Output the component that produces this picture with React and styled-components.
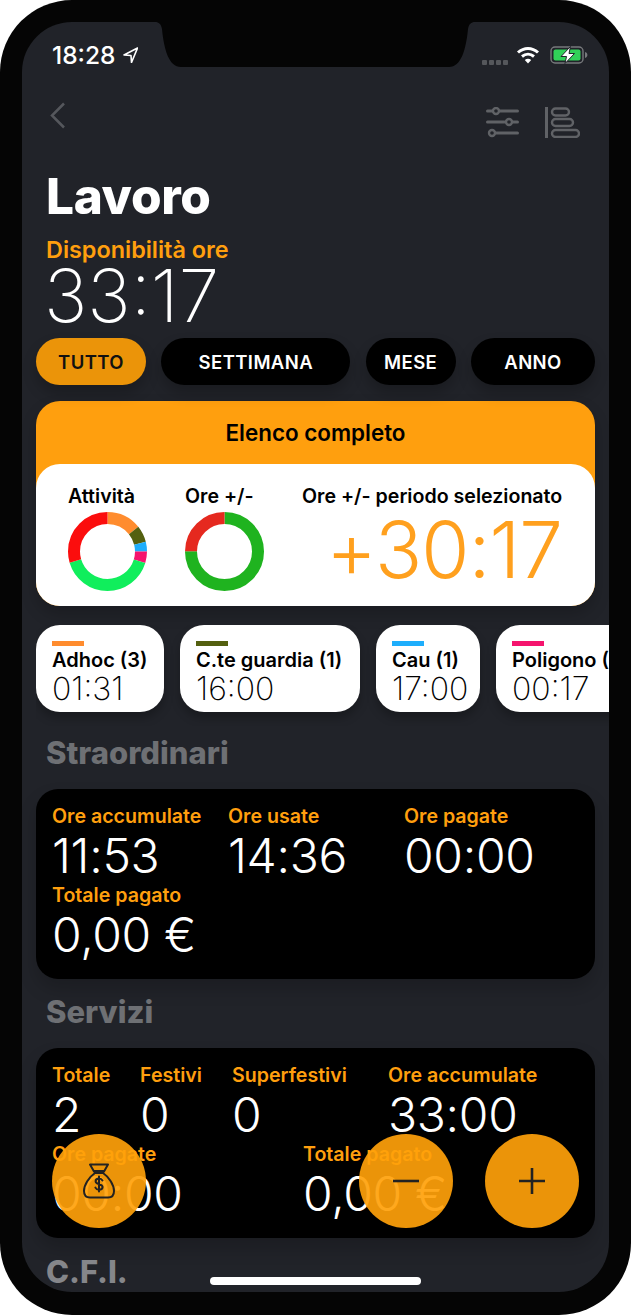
import styled, { createGlobalStyle } from "styled-components";

const GlobalStyle = createGlobalStyle`
  html, body {
    margin: 0;
    padding: 0;
    background: #fff;
    font-family: Inter, "Liberation Sans", sans-serif;
  }
`;

const ORANGE = "#ff9f0e";
const FAB_ORANGE = "#eb9409";

const Bezel = styled.div`
  width: 631px;
  height: 1315px;
  box-sizing: border-box;
  padding: 22px;
  background: #050505;
  border-radius: 72px;
`;

const Screen = styled.div`
  position: relative;
  height: 1270px;
  overflow: hidden;
  border-radius: 50px;
  background: #212329;
  color: #fff;
`;

const Notch = styled.svg`
  position: absolute;
  top: 0;
  left: 130px;
  width: 326px;
  height: 45px;
`;

const StatusBar = styled.div`
  display: flex;
  align-items: center;
  justify-content: space-between;
  height: 26px;
  padding: 20px 21px 0 30px;
`;

const StatusGroup = styled.div`
  display: flex;
  align-items: center;
  gap: ${(p) => p.$gap || 7}px;
`;

const Clock = styled.span`
  font-size: 24.5px;
  font-weight: 500;
`;

const SignalDots = styled.div`
  display: flex;
  gap: 2px;
  margin-top: 14px;
  span {
    width: 5px;
    height: 5px;
    border-radius: 1px;
    background: #55575b;
  }
`;

const NavBar = styled.div`
  display: flex;
  justify-content: space-between;
  align-items: flex-start;
  padding: 34px 29px 0 27px;
  height: 51px;
`;

const NavActions = styled.div`
  display: flex;
  gap: 26px;
  margin-top: 5px;
`;

const Content = styled.div`
  padding: 0 14px;
`;

const Title = styled.h1`
  margin: 15px 0 0 10px;
  font-size: 49.5px;
  line-height: 57px;
  font-weight: 800;
  letter-spacing: -0.3px;
`;

const Available = styled.div`
  margin: 12px 0 0 10px;
  font-size: 23.4px;
  line-height: 26px;
  font-weight: 600;
  color: ${ORANGE};
`;

const BigTime = styled.div`
  margin: 2px 0 0 8px;
  font-size: 73px;
  line-height: 62px;
  font-weight: 200;
`;

const Pills = styled.div`
  display: flex;
  justify-content: space-between;
  margin-top: 11px;
`;

const Pill = styled.div`
  display: flex;
  align-items: center;
  justify-content: center;
  width: ${(p) => p.$width}px;
  height: 47px;
  border-radius: 24px;
  font-size: 18.5px;
  font-weight: 600;
  letter-spacing: 0.4px;
  background: ${(p) => (p.$active ? FAB_ORANGE : "#000")};
  color: ${(p) => (p.$active ? "#111" : "#fff")};
  box-shadow: 0 8px 14px rgba(0, 0, 0, 0.22);
`;

const SummaryCard = styled.section`
  margin-top: 16px;
  height: 205px;
  display: flex;
  flex-direction: column;
  border-radius: 24px;
  background: ${ORANGE};
  box-shadow: 0 8px 16px rgba(0, 0, 0, 0.2);
`;

const SummaryTitle = styled.div`
  height: 63px;
  display: flex;
  align-items: center;
  justify-content: center;
  font-size: 22.4px;
  font-weight: 600;
  color: #000;
`;

const SummaryBody = styled.div`
  flex: 1;
  display: flex;
  padding: 20px 32px 0;
  border-radius: 24px;
  background: #fff;
  color: #000;
`;

const DonutColumn = styled.div`
  width: 117px;
  font-size: 19.6px;
  line-height: 24px;
  font-weight: 600;
  svg {
    display: block;
    margin-top: 4px;
  }
`;

const PeriodColumn = styled.div`
  flex: 1;
  font-size: 19.6px;
  line-height: 24px;
  font-weight: 600;
  white-space: nowrap;
`;

const PeriodValue = styled.div`
  margin: 4px 0 0 24px;
  font-size: 78px;
  line-height: 76px;
  font-weight: 300;
  letter-spacing: -1px;
  color: #ffa01e;
`;

const Chips = styled.div`
  display: flex;
  gap: 16px;
  margin: 19px -14px 0 0;
  overflow: hidden;
  padding-bottom: 14px;
`;

const Chip = styled.div`
  flex: none;
  box-sizing: border-box;
  width: ${(p) => p.$width}px;
  height: 87px;
  padding: 16px 0 0 16px;
  border-radius: 24px;
  background: #fff;
  color: #000;
  box-shadow: 0 6px 10px rgba(0, 0, 0, 0.25);
  white-space: nowrap;
  overflow: hidden;
`;

const ChipBar = styled.div`
  width: 32px;
  height: 5px;
  background: ${(p) => p.$color};
`;

const ChipLabel = styled.div`
  margin-top: 2px;
  font-size: 20px;
  line-height: 25px;
  font-weight: 600;
`;

const ChipValue = styled.div`
  font-size: 32px;
  line-height: 32px;
  font-weight: 200;
`;

const SectionTitle = styled.h2`
  margin: ${(p) => p.$top}px 0 0 10px;
  font-size: 31px;
  line-height: 34px;
  font-weight: 800;
  color: ${(p) => p.$color || "#6e7074"};
`;

const StatsCard = styled.section`
  margin-top: 19px;
  height: 190px;
  box-sizing: border-box;
  padding: 15px 16px 0;
  border-radius: 22px;
  background: #000;
  box-shadow: 0 10px 18px rgba(0, 0, 0, 0.18);
`;

const StatsRow = styled.div`
  display: flex;
  height: 79px;
`;

const Stat = styled.div`
  width: ${(p) => p.$width}px;
  flex: none;
  white-space: nowrap;
`;

const StatLabel = styled.div`
  font-size: 19.6px;
  line-height: 24px;
  font-weight: 600;
  color: ${ORANGE};
`;

const StatValue = styled.div`
  font-size: 48px;
  line-height: 56px;
  font-weight: 300;
  letter-spacing: -0.3px;
`;

const Fab = styled.button`
  position: absolute;
  top: 1112px;
  left: ${(p) => p.$left}px;
  width: 94px;
  height: 94px;
  padding: 0;
  display: flex;
  align-items: center;
  justify-content: center;
  border: 0;
  border-radius: 50%;
  background: rgba(255, 161, 10, 0.92);
  color: #222;
`;

const HomeIndicator = styled.div`
  position: absolute;
  left: 188px;
  bottom: 7px;
  width: 211px;
  height: 8px;
  border-radius: 4px;
  background: #fff;
`;

function Donut({ segments }) {
  // dash segments run clockwise from 12 o'clock
  const r = 33.5;
  const c = 2 * Math.PI * r;
  let offset = 0;
  return (
    <svg width="79" height="79" viewBox="0 0 79 79">
      <g transform="rotate(-90 39.5 39.5)" fill="none" strokeWidth="12">
        {segments.map(([share, color]) => {
          const arc = (
            <circle
              key={color}
              cx="39.5"
              cy="39.5"
              r={r}
              stroke={color}
              strokeDasharray={`${share * c} ${c}`}
              strokeDashoffset={-offset * c}
            />
          );
          offset += share;
          return arc;
        })}
      </g>
    </svg>
  );
}

const chips = [
  { label: "Adhoc (3)", value: "01:31", color: "#ff8c2e", width: 128 },
  { label: "C.te guardia (1)", value: "16:00", color: "#546010", width: 180 },
  { label: "Cau (1)", value: "17:00", color: "#1eaefc", width: 104 },
  { label: "Poligono (1)", value: "00:17", color: "#f5146e", width: 160 },
];

export default function App() {
  return (
    <>
      <GlobalStyle />
      <Bezel>
        <Screen>
          <Notch viewBox="0 0 326 45">
            <path d="M0 0h3c4 0 6 2 7 7C12 28 17 45 29 45H297C309 45 314 28 316 7c1-5 3-7 7-7h3z" fill="#050505" />
          </Notch>

          <StatusBar>
            <StatusGroup>
              <Clock>18:28</Clock>
              <svg width="15" height="16" viewBox="0 0 15 16" fill="none" stroke="#fff" strokeWidth="1.6" strokeLinejoin="round">
                <path d="M14.500 1 1 8l7 .5.500 7z" />
              </svg>
            </StatusGroup>
            <StatusGroup $gap={8}>
              <SignalDots>
                <span />
                <span />
                <span />
                <span />
              </SignalDots>
              <svg width="24" height="18" viewBox="0 0 24 18" fill="none" stroke="#fff" strokeWidth="3">
                <path d="M2 6.500c6-5.500 14-5.500 20 0" />
                <path d="M6 10.500c3.600-3 8.400-3 12 0" />
                <path d="M12 17.500l-3.200-3.600c1.800-1.400 4.600-1.400 6.400 0z" fill="#fff" stroke="none" />
              </svg>
              <svg width="38" height="18" viewBox="0 0 38 18" style={{ marginLeft: 2 }}>
                <rect x="1" y="1" width="32" height="16" rx="4" fill="none" stroke="#77797c" strokeWidth="1.4" />
                <rect x="3.500" y="3.500" width="27" height="11" rx="2" fill="#31d158" />
                <path d="M35 6c1.600.4 2.400 1.600 2.400 3s-.8 2.600-2.400 3z" fill="#77797c" />
                <path d="M20.500.5 11 10.500h5.500L15 17.500l9.500-10H19z" fill="#fff" stroke="#212329" strokeWidth="1" />
              </svg>
            </StatusGroup>
          </StatusBar>

          <NavBar>
            <svg width="17" height="27" viewBox="0 0 17 27" fill="none" stroke="#55575c" strokeWidth="2.5">
              <path d="M15 1.500 3 13.500l12 12" />
            </svg>
            <NavActions>
              <svg width="33" height="31" viewBox="0 0 33 31" fill="none" stroke="#606266" strokeWidth="3" strokeLinecap="round">
                <path d="M1.500 4h5M14 4h17.500M1.500 15h17M27 15h4.500M10 26h21.500" />
                <circle cx="10" cy="4" r="3" strokeWidth="2.400" />
                <circle cx="23" cy="15" r="3" strokeWidth="2.400" />
                <circle cx="6" cy="26" r="3" strokeWidth="2.400" />
              </svg>
              <svg width="35" height="31" viewBox="0 0 35 31" fill="none" stroke="#606266" strokeWidth="2.400">
                <path d="M1.500 0v31" strokeWidth="3" />
                <rect x="7" y="1.500" width="17" height="7" rx="3.500" />
                <rect x="7" y="12" width="21" height="7" rx="3.500" />
                <rect x="7" y="23" width="27" height="7" rx="3.500" />
              </svg>
            </NavActions>
          </NavBar>

          <Content>
            <Title>Lavoro</Title>
            <Available>Disponibilità ore</Available>
            <BigTime>33:17</BigTime>

            <Pills>
              <Pill $active $width={110}>TUTTO</Pill>
              <Pill $width={189}>SETTIMANA</Pill>
              <Pill $width={90}>MESE</Pill>
              <Pill $width={124}>ANNO</Pill>
            </Pills>

            <SummaryCard>
              <SummaryTitle>Elenco completo</SummaryTitle>
              <SummaryBody>
                <DonutColumn>
                  Attività
                  <Donut
                    segments={[
                      [0.142, "#ff8c2e"],
                      [0.068, "#546010"],
                      [0.04, "#1eaefc"],
                      [0.047, "#f5146e"],
                      [0.406, "#10ee5c"],
                      [0.297, "#fb0d0d"],
                    ]}
                  />
                </DonutColumn>
                <DonutColumn>
                  Ore +/-
                  <Donut
                    segments={[
                      [0.75, "#1fb31f"],
                      [0.25, "#e5291f"],
                    ]}
                  />
                </DonutColumn>
                <PeriodColumn>
                  Ore +/- periodo selezionato
                  <PeriodValue>+30:17</PeriodValue>
                </PeriodColumn>
              </SummaryBody>
            </SummaryCard>

            <Chips>
              {chips.map((chip) => (
                <Chip key={chip.label} $width={chip.width}>
                  <ChipBar $color={chip.color} />
                  <ChipLabel>{chip.label}</ChipLabel>
                  <ChipValue>{chip.value}</ChipValue>
                </Chip>
              ))}
            </Chips>

            <SectionTitle $top={10}>Straordinari</SectionTitle>
            <StatsCard>
              <StatsRow>
                <Stat $width={176}>
                  <StatLabel>Ore accumulate</StatLabel>
                  <StatValue>11:53</StatValue>
                </Stat>
                <Stat $width={176}>
                  <StatLabel>Ore usate</StatLabel>
                  <StatValue>14:36</StatValue>
                </Stat>
                <Stat $width={176}>
                  <StatLabel>Ore pagate</StatLabel>
                  <StatValue>00:00</StatValue>
                </Stat>
              </StatsRow>
              <StatsRow>
                <Stat $width={300}>
                  <StatLabel>Totale pagato</StatLabel>
                  <StatValue>0,00 €</StatValue>
                </Stat>
              </StatsRow>
            </StatsCard>

            <SectionTitle $top={16}>Servizi</SectionTitle>
            <StatsCard>
              <StatsRow>
                <Stat $width={88}>
                  <StatLabel>Totale</StatLabel>
                  <StatValue>2</StatValue>
                </Stat>
                <Stat $width={92}>
                  <StatLabel>Festivi</StatLabel>
                  <StatValue>0</StatValue>
                </Stat>
                <Stat $width={156}>
                  <StatLabel>Superfestivi</StatLabel>
                  <StatValue>0</StatValue>
                </Stat>
                <Stat $width={170}>
                  <StatLabel>Ore accumulate</StatLabel>
                  <StatValue>33:00</StatValue>
                </Stat>
              </StatsRow>
              <StatsRow>
                <Stat $width={251}>
                  <StatLabel>Ore pagate</StatLabel>
                  <StatValue>00:00</StatValue>
                </Stat>
                <Stat $width={250}>
                  <StatLabel>Totale pagato</StatLabel>
                  <StatValue>0,00 €</StatValue>
                </Stat>
              </StatsRow>
            </StatsCard>

            <SectionTitle $top={17} $color="#85868a">C.F.I.</SectionTitle>
          </Content>

          <Fab $left={30} aria-label="Pagamenti">
            <svg width="32" height="36" viewBox="0 0 32 36" fill="none" stroke="#222" strokeWidth="2" strokeLinejoin="round">
              <path d="M7 1.500h18l-4 7H11z" />
              <path d="M11 8.500h10" strokeWidth="3" />
              <path d="M12 10C6 14 1 22 1 28c0 4 2 6.500 6 6.500h18c4 0 6-2.500 6-6.500 0-6-5-14-11-18z" />
              <path d="M19.500 17.500c-.8-1.400-2-2-3.500-2-2 0-3.400 1-3.400 2.700 0 3.800 7 2 7 5.800 0 1.700-1.500 2.700-3.600 2.700-1.600 0-2.900-.7-3.600-2.100M16 13.500v15" strokeLinecap="round" />
            </svg>
          </Fab>
          <Fab $left={337} aria-label="Sottrai">
            <svg width="26" height="4" viewBox="0 0 26 4">
              <path d="M0 2h26" stroke="#222" strokeWidth="2.600" />
            </svg>
          </Fab>
          <Fab $left={463} aria-label="Aggiungi">
            <svg width="26" height="26" viewBox="0 0 26 26">
              <path d="M0 13h26M13 0v26" stroke="#222" strokeWidth="2.600" />
            </svg>
          </Fab>

          <HomeIndicator />
        </Screen>
      </Bezel>
    </>
  );
}
